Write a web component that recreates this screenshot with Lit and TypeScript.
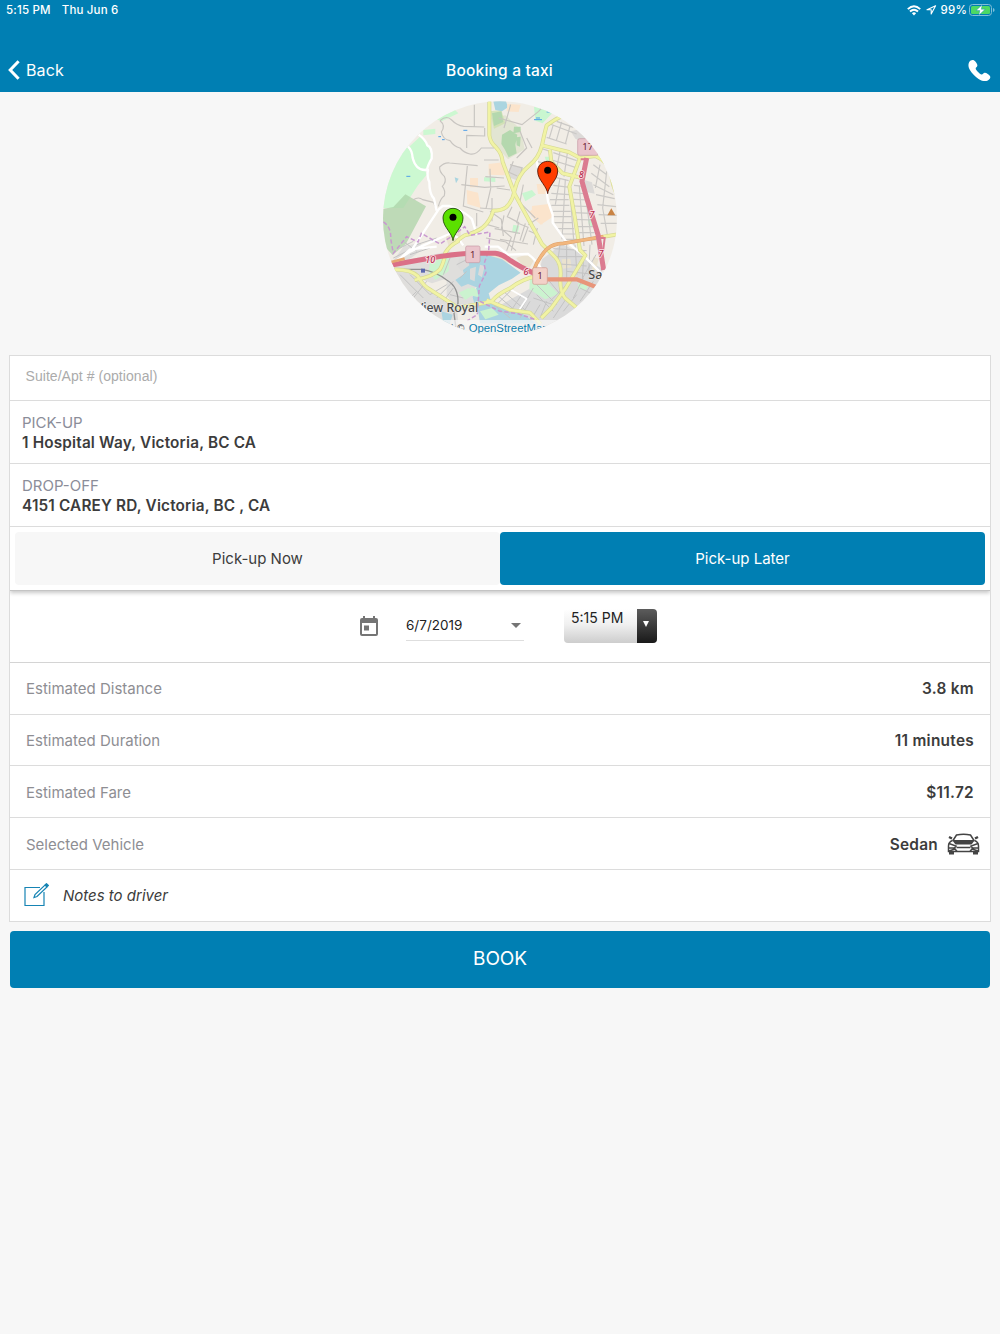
import { LitElement, html, css, svg } from 'lit';
import { customElement, property } from 'lit/decorators.js';

const MINOR_ROADS = [
  'M180 68q20-18 35-2t36 19l62 2M283 20v67M180 68q18 14 4 34 4 22 26 26 12 18 30 22 12 14 30 18t34-18h38M260 150v-38l54 2V90',
  'M100 305q16-10 28 0l32 8 6 12M175 325q6-24 18-32 4-16-6-28 14-14 6-30-16-14-14-28 14-14 30-12l84 8M262 204l-12 120 60 18',
  'M312 186h44M330 212l2 60-14 60M244 260l70 8 60-4M300 330l74 6M336 300v70M290 345v40M350 270l40 6M316 236l56 4',
  'M356 60l70 20 50-40 20-22M372 90l20-70M440 120l16 30M420 100l20 50-30 30M390 200l36 10-10 40M380 220l32 14M400 190l-14 34',
  'M322 380l36 10M330 340l34 24 6 50M318 420l60 12 30 26M372 352l-8 40 30 26-14 40M396 326l-14 30 34 18-12 44M420 340l-10 34 34 14-16 44M436 376l-16 52M344 392l76 14M360 424l84 14M404 418l-10 40M446 398l30 14',
  'M430 260l-12 60M426 320l40 40M445 380l30-20M460 440l12-50',
];

// Denser residential blocks east of the main avenue
const BLOCK_ROADS = [
  'M510 78l80 30M530 70l50 18M500 118l60 20M520 80l-12 40M545 72l-16 56M570 84l-14 54',
  'M480 150l30 10M520 164l70 24M516 186l70 22M540 160l-12 60M562 166l-10 70M470 190l40 10',
  'M526 238l40 10M520 262l50 6M514 286l54 4M510 305h56M514 322h54M518 340h54M520 356h54M524 374h54M530 392h52M540 408h46M550 424h40',
  'M540 240l-14 80M556 244l-10 180M570 280l12 160',
  'M582 262l36 4M580 284l42 4M580 304l46 2M580 324l52 2M582 344l52 2M584 364l54 2M588 386l54 0M590 404l54 0M594 426l54 0',
  'M598 264l14 180M614 270l22 170',
  'M640 200l40 30M634 226l54 40M640 260l60 30M648 290l56 12M652 320l56 6M656 350l54 2M662 376l50 0M660 200l-14 70M680 220l-12 110 14 80',
];

const CITY_ROADS = [
  'M520 452l100 6M516 476l100 0M540 498l80 6M560 440l0 100M585 440l6 90M612 460l-6 100M540 440l-8 60M560 520l90 10M630 440l-4 90M648 470l-40 70M610 540l-30 60M640 550l-40 60M600 570l40 20M560 560l-50 50M470 560l60 60M500 540l50 60M520 620l-60-20M560 600l-40 60M590 590l-40 50M575 620l20 20',
  'M350 590l70 60M370 580l70 60M330 610l60 50M400 570l-60 60M425 590l-40 60M450 610l-30 50M460 570l-40 70M470 590l50 50M480 620l-30 50M500 610l-20 50',
  'M60 530l70 70M90 530l60 60M110 580l-20 20M150 590l50-30M170 600l50-50M190 610l30-40M140 550l-40 50M210 480l-20 50M230 500l40-20M240 540l20-20M90 470l60-20M40 480l60-30M110 440l60-20M70 430l40 30M210 590l40 10M60 450l40-20',
];

const PIN = 'M0-43 C-17-43-30-30-30-14 C-30 2-22 12-14 24 C-6 36-1 44 0 54 C1 44 6 36 14 24 C22 12 30 2 30-14 C30-30 17-43 0-43Z';

const MAIN_ROADS = [
  'M328 0v112q2 20 20 36 18 18 20 44l36 96 82 150q24 24 40 40 20 22 15 62-2 40 14 60l60 50',
  'M550 52q-30 14-50 30-8 30-14 60-10 40-40 62-32 26-42 72-6 34-26 52-14 10-38 10-10 34-34 52-20 14-52 22-30 20-20 18-24 12-38 34-4 30-16 50-20 22-76 32',
  'M486 142l80 20 34 18 46-6q38 16 48 56 2 30 20 66',
  'M510 156l4 36 34 34 58 14',
  'M600 180l-32 86 16 90 16 100 16 16-60 100-42 58-30 30',
  'M40 515q50-2 74 20 16 30 40 42l80 52 100-18q20-24 56-40 40-30 80-36',
  'M320 606l70 30 60 8 32 34',
  'M670 416l50-8',
];

@customElement('route-map')
export class RouteMap extends LitElement {
  static styles = css`
    :host {
      display: block;
      width: 240px;
      height: 240px;
    }

    svg {
      display: block;
      width: 100%;
      height: 100%;
    }

    .minor path {
      fill: none;
      stroke: #c8c5c1;
      stroke-width: 3.5;
    }

    .blocks path {
      fill: none;
      stroke: #cbc9c6;
      stroke-width: 3.5;
    }

    .city path {
      fill: none;
      stroke: #c3c3c3;
      stroke-width: 3;
    }

    .white {
      fill: none;
      stroke: #fff;
      stroke-width: 7;
      stroke-linejoin: round;
    }

    .street {
      stroke-width: 5;
    }

    .casing {
      fill: none;
      stroke: #d6d994;
      stroke-width: 12;
      stroke-linejoin: round;
    }

    .yellow {
      fill: none;
      stroke: #f1f3a4;
      stroke-width: 8;
      stroke-linejoin: round;
    }

    .border {
      fill: none;
      stroke: #c999d0;
      stroke-width: 4.5;
      stroke-dasharray: 13 7;
    }

    .place {
      font: 500 38px 'Noto Sans', sans-serif;
      fill: #4a4a4a;
      stroke: #eee;
      stroke-width: 3;
      paint-order: stroke;
    }

    .road-no {
      font: italic 500 27px 'Noto Sans', sans-serif;
      fill: #b8304f;
      stroke: #fbe3e8;
      stroke-width: 5;
      paint-order: stroke;
      text-anchor: middle;
    }

    .shield {
      font: 400 29px 'Noto Sans', sans-serif;
      fill: #6b1f35;
      text-anchor: middle;
    }

    .credit {
      font: 30px 'Liberation Sans', sans-serif;
      fill: #333;
    }

    .link {
      fill: #0d7ead;
    }
  `;

  render() {
    return html`
      <svg viewBox="0 0 720 720">
        <defs>
          <clipPath id="disc"><circle cx="360" cy="361" r="351" /></clipPath>
        </defs>
        <g clip-path="url(#disc)">
          <rect width="720" height="720" fill="#f1ede6" />
          <path fill="#ccf8d1" d="M0 330V200L70 150 88 148 100 196 134 212 140 230 114 262 70 330Z M86 148l34-32 24 24 12 36-10 32-18 6-22-14Z M130 96l36-4v16l-36 4Z M165 62l60-26 10 10-50 24Z" />
          <path fill="#acd3a7" opacity=".75" d="M0 335l40-8 36-38 62 36-60 112-40 34-38-40Z" />
          <path fill="#e2e5d2" d="M326 60l50-8 46 42 12 60-50 30-36-40-22-34Z" />
          <path fill="#ccdfaa" opacity=".7" d="M330 40l34-4 12 40-34 16Z" />
          <path fill="#b4d8ae" d="M336 46l28-6 6 32-28 12Z M366 110l24-14 22 14-6 30 4 26-24 12-12-24-10-16Z M402 86l20 0 0 16-22 4Z M408 118l14-2-2 30-10-4Z" />
          <path fill="#abd5e0" d="M340 10l36-6 8 24-18 12-20-4Z M224 238l12 4-8 14Z" />
          <path fill="#c9f6d0" d="M462 26l60 14-34 36-22-8Z M312 238l34 0v14l-34-2Z M426 286l30-10 12 14-32 20Z M494 176l22 0 6 46-16-8Z M400 380l18 4-6 24-16-6Z M624 360l14 0 6 30-18-10Z" />
          <path fill="#fbe4cc" d="M382 18l40 2-6 22-36-2Z M326 198l50-6-2 40-48-2Z M260 276l34 8 8 46-40-12Z M270 240h24v28h-24Z M456 324l50-6 16 36-40 26-28-26Z M470 258l28 0 0 30-24 0Z M446 342l30-20 30 28-20 30Z" />
          <path fill="#dcdad8" d="M392 200l38 8-12 42-36-14Z M572 100l44-10v46l-30-14Z M610 245l26 8 8 34-30-6Z M668 172l30 28-16 4Z" />
          <path fill="#dfdedc" d="M38 490l34-46 50-10 6 20-40 30 120-24 24 16-16 60-60 20-80-30-36 0Z M40 520l66 10 48 52 76 40 8 80H140L20 560Z M200 480l70-12 50 14-20 60-20 40 20 50H230l-30-40Z" />
          <path fill="#dadada" d="M486 484l60-46 60 30 60 46 10 90-110 80H300l20-40 90-50 60-34Z" />
          <path fill="#cbf3cf" d="M150 490l56-14 0 44-40 26-20-22Z M450 538l46 10 40 40-40 16-48-30Z M236 584l30-14 20 16-30 20Z M594 556l34 0-10 20-24-4Z" />
          <path fill="#eae2cf" d="M408 480l36-12 20 14-20 36Z M300 460h40l60 40-60-20Z M196 412l46-20 0 40-36 12Z M640 476l16 6-10 40-10-6Z M545 484l26-2 4 26-26 4Z" />
          <path fill="#abd4e1" d="M262 474l36-6 34 6 34 10 56 40-26 18-40 20-30 24 6 20-46 22-8-30 12-30-26-10-20 8-18-20 26-18-6-20Z M184 640l34 10-10 30-14 20Z M288 600l40 8 60 34 40 6 40 28H300Z" />
          <path fill="#dcdbda" d="M238 480l26 4 4 18-24 18-12-16Z M270 512l18-6-4 44-14-6Z M300 500l14 4-8 34-12-8Z" />
          <path fill="#cbf3cf" d="M272 566l18 8 6 24-26-6Z M300 640l36-10 20 20-40 14Z" />
          <g stroke="#4f9fe8" stroke-width="3"><path d="M250 97h12M79 235h12M175 116h8M186 125h8M154 429h14M462 65h24M500 42h18M468 60h12" /></g>

          <g class="minor">${MINOR_ROADS.map((d) => svg`<path d=${d} />`)}</g>
          <g class="blocks">${BLOCK_ROADS.map((d) => svg`<path d=${d} />`)}</g>
          <g class="city">${CITY_ROADS.map((d) => svg`<path d=${d} />`)}</g>
          <path fill="none" stroke="#929292" stroke-width="4" d="M40 514h86q40 6 74 32 36 20 34 70l-12 30 8 60" />
          <rect x="123" y="512" width="12" height="12" fill="#5b69b0" />

          <path class="white" d="M84 146q12 10 14 34 10 36 36 36h10q-4 20 4 36 0 36 14 50l8 36M116 110q20 14 26 32 16 6 13 40-12 20-14 34" />
          <path class="white" d="M46 490l46-30 30-14 86-38 24 10 18 24M92 460l34-50 50-76 12-10h22q50 20 66 40l14 46M40 500l50-46 80-8" />
          <path class="white" d="M468 180l6 30M500 280l4 30 14 40 0 24 40 56 50 40 60 60" />
          <path class="white" d="M314 446l40 0 30 24 60-2q20 14 40 44" />
          <path class="white street" d="M384 570l56 32-24 36" />

          ${MAIN_ROADS.map((d) => svg`<path class="casing" d=${d} />`)}
          ${MAIN_ROADS.map((d) => svg`<path class="yellow" d=${d} />`)}

          <path class="border" d="M10 372q24 14 22 50l8 44 40-50 34 16 10-26 56 32 40-26 34-26 16 26 60-10-4 56-14 40 6 26-20 40-6 86-30 18M300 610l60 30 50 6 60 20" />

          <path fill="none" stroke="#dca06c" stroke-width="11" d="M460 520q12-36 40-66 20-18 50-18l60-10 60-10" />
          <path fill="none" stroke="#f2b77e" stroke-width="8" d="M460 520q12-36 40-66 20-18 50-18l60-10 60-10" />
          <path fill="none" stroke="#e8957a" stroke-width="13" d="M500 544h90l60 24" />
          <path fill="none" stroke="#db7087" stroke-width="15" d="M30 502l110-20q80-14 140-16h66q20 2 46 22 26 18 70 38" />
          <path fill="none" stroke="#e5a873" stroke-width="8" d="M34 492l40-10" />
          <path fill="none" stroke="#db7b90" stroke-width="15" d="M620 180l-14 70 14 50 34 110 17 106" />
          <path fill="none" stroke="#db7b90" stroke-width="6" d="M602 184h22M656 420h18l-4 34h-8" />

          <rect x="593" y="122" width="62" height="50" rx="6" fill="#eac5cc" stroke="#c699a3" stroke-width="2" />
          <text class="shield" x="623" y="157">17</text>
          <rect x="257" y="444" width="43" height="50" rx="5" fill="#eac5cc" stroke="#c699a3" stroke-width="2" />
          <text class="shield" x="278" y="479">1</text>
          <rect x="458" y="509" width="44" height="50" rx="5" fill="#f3d1c8" stroke="#cf9b8f" stroke-width="2" />
          <text class="shield" x="480" y="544">1</text>
          <text class="road-no" x="151" y="494">10</text>
          <text class="road-no" x="438" y="530">6</text>
          <text class="road-no" x="604" y="239">8</text>
          <text class="road-no" x="636" y="360">7</text>
          <text class="road-no" x="663" y="476">7</text>
          <path fill="#c98343" d="M694 331l12 21h-24Z" />

          <text class="place" x="107" y="641" textLength="188" lengthAdjust="spacingAndGlyphs">View Royal</text>
          <text class="place" x="625" y="542">Sa</text>

          <rect y="666" width="720" height="60" fill="#f8f8f8" opacity=".72" />
          <text class="credit" x="212" y="702">|</text>
          <text class="credit" x="231" y="702">©</text>
          <text class="credit link" x="266" y="702" textLength="240" lengthAdjust="spacingAndGlyphs">OpenStreetMap</text>
        </g>
        <g transform="translate(219 374)">
          <path d=${PIN} fill="#5be000" stroke="#1c3d08" stroke-width="2.5" />
          <circle cy="-16" r="10.5" />
        </g>
        <g transform="translate(503 233)">
          <path d=${PIN} fill="#ff3d00" stroke="#4a1406" stroke-width="2.5" />
          <circle cy="-16" r="10.5" />
        </g>
      </svg>
    `;
  }
}

@customElement('estimate-row')
export class EstimateRow extends LitElement {
  @property() label = '';
  @property() value = '';

  static styles = css`
    :host {
      display: flex;
      align-items: center;
      justify-content: space-between;
      box-sizing: border-box;
      height: 51.8px;
      padding: 1px 16px 0;
      border-bottom: 1px solid #dcdcdc;
      font-size: 15px;
    }

    .label {
      color: #8e8e93;
    }

    .value {
      display: flex;
      align-items: center;
      color: #3c3c3c;
      font-size: 15.4px;
      font-weight: 600;
      letter-spacing: 0.28px;
    }
  `;

  render() {
    return html`
      <span class="label">${this.label}</span>
      <span class="value">${this.value}<slot></slot></span>
    `;
  }
}

@customElement('app-root')
export class AppRoot extends LitElement {
  static styles = css`
    :host {
      display: block;
      min-height: 1334px;
      background: #f7f7f7;
      color: #3c3c3c;
      font-family: Inter, sans-serif;
      font-size: 15px;
    }

    header {
      height: 92px;
      background: #007fb3;
      color: #fff;
    }

    .status {
      display: flex;
      justify-content: space-between;
      height: 20px;
      padding: 0 5px 0 6px;
      font-size: 11.5px;
      font-weight: 500;
      letter-spacing: 0.18px;
      line-height: 20px;
    }

    .status div {
      display: flex;
      align-items: center;
    }

    .date {
      margin-left: 11px;
    }

    .location {
      margin-left: 5px;
    }

    .battery-text {
      margin: 0 2px 0 4px;
    }

    .nav {
      display: grid;
      grid-template-columns: 1fr auto 1fr;
      align-items: center;
      height: 44px;
      padding: 28px 9px 0 8px;
    }

    .back {
      display: flex;
      align-items: center;
      gap: 6px;
      font-size: 16px;
      letter-spacing: 0.15px;
    }

    .title {
      font-size: 15.5px;
      font-weight: 500;
      letter-spacing: 0.2px;
    }

    .phone {
      justify-self: end;
    }

    route-map {
      margin: 6px auto 17px;
    }

    .card {
      margin: 0 9px;
      border: 1px solid #dcdcdc;
      border-bottom: 0;
      background: #fff;
    }

    .suite {
      box-sizing: border-box;
      height: 45px;
      padding-left: 15.5px;
      border-bottom: 1px solid #dcdcdc;
      color: #ababab;
      font: 14px/41px 'Liberation Sans', sans-serif;
      letter-spacing: 0.05px;
    }

    .address {
      box-sizing: border-box;
      height: 63.2px;
      padding: 12px 12px 0;
      border-bottom: 1px solid #dcdcdc;
      line-height: 19.5px;
    }

    .address span {
      display: block;
      color: #8b8d99;
    }

    .address b {
      font-size: 15.3px;
      font-weight: 600;
      letter-spacing: 0.18px;
    }

    .segment {
      position: relative;
      display: flex;
      height: 53px;
      padding: 5px;
      border-bottom: 1px solid #c4c4c4;
      box-shadow: 0 2px 4px rgba(0, 0, 0, 0.22);
      clip-path: inset(0 0 -8px 0);
    }

    .segment div {
      flex: 1;
      border-radius: 4px;
      background: #f7f7f7;
      line-height: 54px;
      text-align: center;
    }

    .segment .active {
      background: #007fb3;
      color: #fff;
    }

    .when {
      display: flex;
      align-items: center;
      box-sizing: border-box;
      height: 71.4px;
      padding: 0 0 2px 350px;
      border-bottom: 1px solid #d4d4d4;
      color: #222;
      font-size: 13.5px;
    }

    .day {
      display: flex;
      align-items: center;
      justify-content: space-between;
      width: 118px;
      height: 30px;
      margin: 0 40px 0 28px;
      border-bottom: 1px solid #dedede;
    }

    .arrow {
      border: 5px solid transparent;
      border-top-color: #757575;
      border-bottom: 0;
      margin-right: 3px;
    }

    .time {
      display: flex;
      width: 93px;
      height: 34px;
      overflow: hidden;
      border-radius: 4px;
      background: linear-gradient(#fff, #f0f0f0 45%, #cdcdcd);
    }

    .time span {
      flex: 1;
      padding-left: 7px;
      font-size: 14px;
      line-height: 17px;
      white-space: nowrap;
    }

    .drop {
      display: flex;
      align-items: center;
      justify-content: center;
      width: 20px;
      background: linear-gradient(#5c5c5c, #191919);
    }

    .drop i {
      border: 3.5px solid transparent;
      border-top: 6px solid #fff;
      border-bottom: 0;
      margin: -3px 2px 0 0;
    }

    .car {
      margin: 0 -6px 0 9px;
    }

    .notes {
      display: flex;
      align-items: center;
      gap: 14px;
      height: 51px;
      padding-left: 14px;
      border-bottom: 1px solid #dcdcdc;
      font-style: italic;
    }

    .book {
      margin: 9px 10px 0;
      height: 57px;
      border-radius: 4px;
      background: #007fb3;
      color: #fff;
      font-size: 19px;
      letter-spacing: -0.1px;
      line-height: 55px;
      text-align: center;
    }
  `;

  render() {
    return html`
      <header>
        <div class="status">
          <div><span>5:15 PM</span><span class="date">Thu Jun 6</span></div>
          <div>
            <svg width="14" height="11" viewBox="0 0 14 11" fill="none" stroke="#fff" stroke-width="1.9">
              <path d="M.8 4.1Q7-1.7 13.2 4.1M3 6.5Q7 2.8 11 6.5" />
              <path d="M4.9 8.2Q7 6.4 9.1 8.2L7 10.4Z" fill="#fff" stroke="none" />
            </svg>
            <svg class="location" width="11" height="10" viewBox="0 0 11 10" fill="none" stroke="#fff" stroke-width="1.1" stroke-linejoin="round">
              <path d="M9.6.8L1 4.7h4.2V9Z" />
            </svg>
            <span class="battery-text">99%</span>
            <svg width="26" height="12" viewBox="0 0 26 12">
              <rect x=".5" y=".5" width="22" height="11" rx="3" fill="none" stroke="#80bfd9" />
              <rect x="2" y="2" width="19" height="8" rx="1.5" fill="#4cd964" />
              <path d="M24 4v4q1.6-.6 1.6-2T24 4Z" fill="#80bfd9" />
              <path d="M13.2.8L7 6.6h3.8L9.8 11.2l6.4-6h-3.9Z" fill="#fff" stroke="#007fb3" stroke-width=".4" />
            </svg>
          </div>
        </div>
        <div class="nav">
          <div class="back">
            <svg width="12" height="20" viewBox="0 0 12 20" fill="none" stroke="#fff" stroke-width="3">
              <path d="M10.6 1.2L2.2 10l8.4 8.8" />
            </svg>
            Back
          </div>
          <div class="title">Booking a taxi</div>
          <svg class="phone" width="23" height="23" viewBox="0 0 23 23" fill="#fff">
            <path d="M1.1 3.2C2.2 1.2 4.4.4 5.8 1.2c1.8 1.1 3.7 3.6 3.6 5.3-.1 1.4-1.9 1.900-1.700 3.200.3 1.500 4.300 5.500 5.800 5.800 1.300.2 1.800-1.600 3.200-1.700 1.700-.1 4.500 1.900 5.400 3.500.8 1.400-.4 3.300-2.300 4.200-2.500 1.200-5.600.6-9.200-1.600-3.600-2.200-6.700-5.400-8.700-8.800C.3 8.300 0 5.300 1.100 3.200Z" />
          </svg>
        </div>
      </header>

      <route-map></route-map>

      <div class="card">
        <div class="suite">Suite/Apt # (optional)</div>
        <div class="address"><span>PICK-UP</span><b>1 Hospital Way, Victoria, BC CA</b></div>
        <div class="address"><span>DROP-OFF</span><b>4151 CAREY RD, Victoria, BC , CA</b></div>
        <div class="segment">
          <div>Pick-up Now</div>
          <div class="active">Pick-up Later</div>
        </div>
        <div class="when">
          <svg width="18" height="20" viewBox="0 0 18 20" fill="#757575">
            <path fill-rule="evenodd" d="M3 0h2v2h8V0h2v2h1q2 0 2 2v14q0 2-2 2H2q-2 0-2-2V4q0-2 2-2h1ZM2 7v11h14V7Z" />
            <rect x="4" y="9.5" width="5" height="5" />
          </svg>
          <div class="day">6/7/2019<span class="arrow"></span></div>
          <div class="time"><span>5:15 PM</span><div class="drop"><i></i></div></div>
        </div>
        <estimate-row label="Estimated Distance" value="3.8 km"></estimate-row>
        <estimate-row label="Estimated Duration" value="11 minutes"></estimate-row>
        <estimate-row label="Estimated Fare" value="$11.72"></estimate-row>
        <estimate-row label="Selected Vehicle" value="Sedan">
          <svg class="car" width="33" height="22" viewBox="0 0 33 22" fill="none" stroke="#444" stroke-width="1.5">
            <path d="M6 7.5L9.5 2Q16.5.4 23.5 2L27 7.5" />
            <path d="M5 7h23l-3.5 4.500h-16Z" fill="#444" stroke="none" />
            <path d="M2 4l3 1.5M31 4l-3 1.5" stroke-width="2.5" />
            <path d="M5.5 7.5Q1.5 9 1.5 13v5.5h30V13q0-4-4-5.5" />
            <path d="M2 10.5l7 2.5-1.5 2H2M31 10.5L24 13l1.5 2H31M9.5 14.5h14M2 18l6-2 2 2.5M31 18l-6-2-2 2.5" />
            <path d="M2 18.5h5v3H2ZM26 18.5h5v3h-5Z" fill="#444" stroke="none" />
          </svg>
        </estimate-row>
        <div class="notes">
          <svg width="25" height="24" viewBox="0 0 25 24" fill="none" stroke="#1684b4" stroke-width="1.2">
            <path d="M16 4.5H1v18h19V9" />
            <path d="M10 14.5l1-3L21 2l2 2L13 13.5Z" />
            <path d="M21.5 1.5l1-.8 1.8 1.8-1 1Z" fill="#1684b4" />
          </svg>
          Notes to driver
        </div>
      </div>
      <div class="book">BOOK</div>
    `;
  }
}
